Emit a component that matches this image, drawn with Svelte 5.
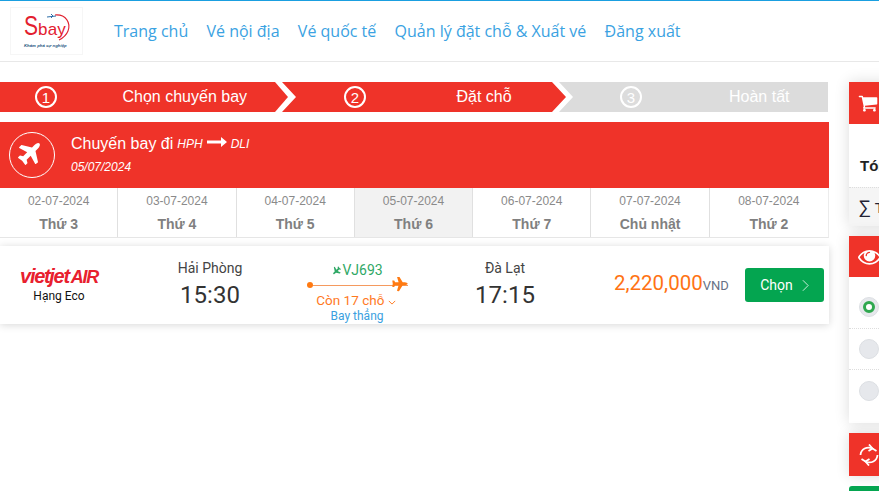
<script>
  const dates = [
    { d: '02-07-2024', w: 'Thứ 3' },
    { d: '03-07-2024', w: 'Thứ 4' },
    { d: '04-07-2024', w: 'Thứ 5' },
    { d: '05-07-2024', w: 'Thứ 6', active: true },
    { d: '06-07-2024', w: 'Thứ 7' },
    { d: '07-07-2024', w: 'Chủ nhật' },
    { d: '08-07-2024', w: 'Thứ 2' }
  ];
  const nav = ['Trang chủ', 'Vé nội địa', 'Vé quốc tế', 'Quản lý đặt chỗ & Xuất vé', 'Đăng xuất'];
  const plane = 'M1376 160q44 52 12 148t-108 172l-161 161 160 696q5 19-12 33l-128 96q-7 6-19 6-4 0-7-1-15-3-21-16l-279-508-259 259 53 194q5 17-8 31l-96 96q-9 9-23 9h-2q-15-2-24-13l-189-252-252-189q-11-7-13-23-1-13 9-25l96-97q9-9 23-9 6 0 8 1l194 53 259-259-508-279q-14-8-17-24-2-16 9-27l128-128q14-13 30-8l665 159 160-160q76-76 172-108t148 12z';
</script>

<div class="page">
  <header class="top">
    <div class="logo">
      <div class="brand"><span class="big-s">S</span><span class="bay">bay</span></div>
      <svg class="arc" viewBox="0 0 40 34" aria-hidden="true">
        <path d="M22 4 C33 3 38 12 35 20 C33 25 30 27 26 29" fill="none" stroke="#e0202e" stroke-width="1.1" />
        <path d="M14 6 l9 -1 M18 3 l2 2 l-2 2" fill="none" stroke="#2d6ea8" stroke-width="1" />
      </svg>
      <div class="slogan">Khám phá sự nghiệp</div>
    </div>
    <nav class="nav">
      {#each nav as item}
        <span>{item}</span>
      {/each}
    </nav>
  </header>

  <div class="layout">
    <main class="main">
      <div class="steps">
        <div class="step s1">
          <span class="num">1</span><span class="label">Chọn chuyến bay</span>
        </div>
        <div class="step s2">
          <span class="num">2</span><span class="label">Đặt chỗ</span>
        </div>
        <div class="step s3">
          <span class="num">3</span><span class="label">Hoàn tất</span>
        </div>
      </div>

      <section class="route">
        <div class="route-icon">
          <svg viewBox="0 0 1792 1792" width="28" height="28" aria-hidden="true"><path fill="#fff" d={plane} /></svg>
        </div>
        <div class="route-text">
          <div class="route-title">
            Chuyến bay đi <i>HPH</i>
            <svg class="long-arrow" viewBox="0 0 20 10" width="20" height="10" aria-hidden="true"><path d="M0 3.500h14V0l6 5-6 5V6.500H0z" fill="#fff" /></svg>
            <i>DLI</i>
          </div>
          <div class="route-date">05/07/2024</div>
        </div>
      </section>

      <div class="dates">
        {#each dates as item}
          <div class="date" class:active={item.active}>
            <div class="d">{item.d}</div>
            <div class="w">{item.w}</div>
          </div>
        {/each}
      </div>

      <article class="flight">
        <div class="airline">
          <div class="vj">vietjet<span class="air">AIR</span></div>
          <div class="cls">Hạng Eco</div>
        </div>
        <div class="place">
          <div class="city">Hải Phòng</div>
          <div class="time">15:30</div>
        </div>
        <div class="mid">
          <div class="code">
            <svg viewBox="0 0 1792 1792" width="10" height="10" aria-hidden="true"><g transform="rotate(180 896 896)"><path fill="#2fa866" d={plane} /></g></svg>VJ693
          </div>
          <div class="track">
            <span class="dot"></span>
            <span class="line"></span>
            <svg class="track-plane" viewBox="0 0 1792 1792" width="17" height="17" aria-hidden="true"><g transform="rotate(45 896 896)"><path fill="#ff7a12" d={plane} /></g></svg>
          </div>
          <div class="seats">
            Còn 17 chỗ
            <svg viewBox="0 0 10 6" width="8" height="5" aria-hidden="true"><path d="M1 1l4 4 4-4" fill="none" stroke="#ff7a1f" stroke-width="1.200" /></svg>
          </div>
          <div class="direct">Bay thẳng</div>
        </div>
        <div class="place to">
          <div class="city">Đà Lạt</div>
          <div class="time">17:15</div>
        </div>
        <div class="price"><span class="amount">2,220,000</span><span class="cur">VND</span></div>
        <button class="choose">
          Chọn
          <svg viewBox="0 0 8 14" width="7" height="13" aria-hidden="true"><path d="M1 1l6 6-6 6" fill="none" stroke="#fff" stroke-width="0.9" /></svg>
        </button>
      </article>
    </main>

    <aside class="side">
      <section class="panel summary">
        <div class="phead">
          <svg viewBox="0 0 1792 1792" width="20" height="20" aria-hidden="true"><path fill="#fff" d="M704 1536q0 52-38 90t-90 38-90-38-38-90 38-90 90-38 90 38 38 90zm896 0q0 52-38 90t-90 38-90-38-38-90 38-90 90-38 90 38 38 90zm128-1088v512q0 24-16.500 42.500t-40.500 21.500l-1044 122q13 60 13 70 0 16-24 64h920q26 0 45 19t19 45-19 45-45 19h-1024q-26 0-45-19t-19-45q0-11 8-31.500t16-36 21.500-40 15.500-29.500l-177-823h-204q-26 0-45-19t-19-45 19-45 45-19h256q16 0 28.500 6.500t19.500 15.500 13 24.500 8 26 5.500 29.500 4.500 26h1201q26 0 45 19t19 45z" /></svg>
        </div>
        <div class="sum-body">Tóm tắt chuyến bay</div>
        <div class="sum-total"><span class="sigma">∑</span> Tổng cộng</div>
      </section>

      <section class="panel options">
        <div class="phead eye">
          <svg viewBox="0 0 1792 1792" width="23" height="23" aria-hidden="true"><path fill="#fff" d="M1664 960q-152-236-381-353 61 104 61 225 0 185-131.500 316.500t-316.500 131.500-316.500-131.500-131.500-316.500q0-121 61-225-229 117-381 353 133 205 333.500 326.500t434.500 121.500 434.500-121.500 333.500-326.500zm-720-384q0-20-14-34t-34-14q-125 0-214.500 89.500t-89.500 214.500q0 20 14 34t34 14 34-14 14-34q0-86 61-147t147-61q20 0 34-14t14-34zm848 384q0 34-20 69-140 230-376.500 368.500t-499.500 138.500-499.500-139-376.500-368q-20-35-20-69t20-69q140-229 376.500-368t499.500-139 499.500 139 376.500 368q20 35 20 69z" /></svg>
        </div>
        <div class="opt"><span class="radio on"></span></div>
        <div class="opt"><span class="radio"></span></div>
        <div class="opt last"><span class="radio"></span></div>
      </section>

      <section class="panel swap">
        <div class="phead">
          <svg viewBox="0 0 22 22" width="22" height="22" aria-hidden="true">
            <path d="M2.500 11C3 5 9 2 14.500 4.500l4 2.500M19.500 11c-.5 6-6.500 9-12 6.500l-4-2.500" fill="none" stroke="#fff" stroke-width="1.800" />
            <path d="M11 .5l3.500 4-4 2.500M11 21.500l-3.500-4 4-2.500" fill="none" stroke="#fff" stroke-width="1.800" />
          </svg>
        </div>
      </section>

      <div class="green"></div>
    </aside>
  </div>
</div>

<style>
  :global(html), :global(body) {
    overflow: hidden;
    height: 100%;
    background: #fff;
  }

  .page {
    width: 879px;
    height: 491px;
    overflow: hidden;
    font-family: "Liberation Sans", Arial, sans-serif;
    color: #333;
  }

  .top {
    height: 62px;
    box-sizing: border-box;
    border-top: 1px solid #1a9fe0;
    border-bottom: 1px solid #e8e8e8;
    display: flex;
    align-items: flex-start;
    padding: 6px 0 0 10px;
  }

  .logo {
    position: relative;
    width: 73px;
    height: 48px;
    box-sizing: border-box;
    border: 1px solid #f6f6f6;
    flex-shrink: 0;
  }

  .brand {
    color: #e3202f;
    font-family: "Liberation Sans", sans-serif;
    line-height: 1;
    padding: 4px 0 0 13px;
    display: flex;
    align-items: baseline;
  }

  .big-s {
    display: inline-block;
    width: 14px;
    font-size: 28px;
    transform: scaleX(0.75);
    transform-origin: left center;
  }

  .bay { font-size: 17px; letter-spacing: 0.2px; }

  .arc {
    position: absolute;
    left: 22px;
    top: 3px;
    width: 40px;
    height: 34px;
  }

  .slogan {
    position: absolute;
    left: 13px;
    top: 35px;
    font-size: 4.300px;
    font-style: italic;
    font-weight: 700;
    color: #27577f;
    white-space: nowrap;
  }

  .nav {
    display: flex;
    gap: 18.300px;
    margin-left: 31px;
    padding-top: 13px;
    font-family: "Open Sans", sans-serif;
    font-size: 16px;
    line-height: 22px;
    color: #3aa2e2;
  }

  .layout {
    display: flex;
    gap: 20px;
    padding-top: 20px;
  }

  .main {
    width: 829px;
    flex-shrink: 0;
  }

  .steps {
    display: flex;
    width: 828px;
    height: 30px;
    color: #fff;
    font-size: 16px;
  }

  .step {
    display: flex;
    align-items: center;
    background: #ef3329;
    flex-shrink: 0;
    box-sizing: border-box;
    height: 30px;
  }

  .s1 {
    width: 288px;
    margin-right: -6px;
    padding-left: 35px;
    clip-path: polygon(0 0, calc(100% - 13px) 0, 100% 50%, calc(100% - 13px) 100%, 0 100%);
  }

  .s2 {
    width: 284px;
    margin-right: -7px;
    padding-left: 62px;
    clip-path: polygon(0 0, calc(100% - 14px) 0, 100% 50%, calc(100% - 14px) 100%, 0 100%, 14px 50%);
  }

  .s3 {
    flex: 1;
    flex-shrink: 1;
    padding-left: 61px;
    background: #dcdcdc;
    clip-path: polygon(0 0, 100% 0, 100% 100%, 0 100%, 14px 50%);
  }

  .num {
    width: 22px;
    height: 22px;
    box-sizing: border-box;
    border: 2px solid #fff;
    border-radius: 50%;
    display: flex;
    align-items: center;
    justify-content: center;
    font-size: 15px;
  }

  .s1 .label { margin-left: 65.500px; }
  .s2 .label { margin-left: 90.500px; }
  .s3 .label { margin-left: 87px; }

  .route {
    margin-top: 10px;
    height: 66px;
    background: #ef3329;
    color: #fff;
    display: flex;
    align-items: center;
    padding-left: 9px;
  }

  .route-icon {
    width: 46px;
    height: 46px;
    box-sizing: border-box;
    border: 1px solid #fff;
    border-radius: 50%;
    display: flex;
    align-items: center;
    justify-content: center;
  }

  .route-text {
    margin-left: 16px;
    margin-top: -2px;
  }

  .route-title {
    font-size: 16px;
    line-height: 20px;
    display: flex;
    align-items: center;
    gap: 4px;
    white-space: nowrap;
  }

  .route-title i { font-size: 12px; margin-top: 1px; }
  .long-arrow { margin-top: -3px; }

  .route-date {
    font-size: 12px;
    font-style: italic;
    margin-top: 5px;
    line-height: 16px;
  }

  .dates {
    display: grid;
    grid-template-columns: repeat(7, 1fr);
    height: 50px;
    box-sizing: border-box;
    border-bottom: 1px solid #e6e6e6;
    border-right: 1px solid #ececec;
  }

  .date {
    text-align: center;
    border-right: 1px solid #e0e0e0;
    padding-top: 6px;
  }

  .date:last-child { border-right: 0; }
  .date.active { background: #f2f2f2; }

  .d {
    font-size: 12px;
    line-height: 14px;
    color: #8a8a8a;
  }

  .w {
    font-size: 14px;
    font-weight: 700;
    line-height: 16px;
    margin-top: 8px;
    color: #808080;
  }

  .flight {
    margin-top: 8px;
    height: 78px;
    background: #fff;
    box-shadow: 0 1px 8px rgba(0, 0, 0, 0.16);
    display: grid;
    grid-template-columns: 118px 184px 110px 186px 1fr auto;
    align-items: start;
    padding-right: 5px;
    font-family: Roboto, sans-serif;
  }

  .airline {
    text-align: center;
    padding-top: 19px;
  }

  .vj {
    color: #e8202e;
    font-family: "Liberation Sans", sans-serif;
    font-size: 20px;
    font-weight: 700;
    font-style: italic;
    letter-spacing: -1.300px;
    line-height: 23px;
    white-space: nowrap;
  }

  .air { font-size: 18px; margin-left: 2px; }

  .cls {
    font-size: 12px;
    line-height: 14px;
    color: #111;
  }

  .place {
    text-align: center;
    padding-top: 14px;
  }

  .city {
    font-size: 14px;
    line-height: 16px;
    color: #444;
  }

  .time {
    font-size: 24px;
    line-height: 28px;
    margin-top: 5px;
    color: #333;
  }

  .mid {
    position: relative;
    text-align: center;
    padding-top: 16px;
  }

  .code {
    font-size: 14px;
    line-height: 16px;
    color: #2fa866;
    display: flex;
    justify-content: center;
    align-items: center;
    gap: 1px;
  }

  .track {
    position: relative;
    height: 14px;
    margin: 0 4px 0 5px;
    display: flex;
    align-items: center;
  }

  .dot {
    width: 6px;
    height: 6px;
    border-radius: 50%;
    background: #ff7a12;
    flex-shrink: 0;
  }

  .line {
    flex: 1;
    height: 1px;
    background: #f59a5f;
  }

  .track-plane {
    position: absolute;
    right: 0;
    top: -1px;
  }

  .seats {
    font-size: 13.500px;
    line-height: 16px;
    color: #ff7a1f;
    white-space: nowrap;
    margin-right: 2px;
  }

  .direct {
    font-size: 12px;
    line-height: 14px;
    color: #3a9fe0;
    white-space: nowrap;
    margin-top: 1px;
  }

  .price {
    padding: 22px 0 0 16px;
    line-height: 30px;
    white-space: nowrap;
  }

  .amount {
    font-size: 20.500px;
    color: #ff7314;
  }

  .cur {
    font-size: 13px;
    color: #667085;
  }

  .choose {
    margin-top: 22px;
    width: 79px;
    height: 34px;
    border: 0;
    border-radius: 3px;
    background: #04a550;
    color: #fff;
    font-family: Roboto, sans-serif;
    font-size: 14px;
    display: flex;
    align-items: center;
    justify-content: center;
    gap: 9px;
    padding: 0;
  }

  .side {
    width: 300px;
    flex-shrink: 0;
    display: flex;
    flex-direction: column;
    gap: 10px;
  }

  .panel {
    background: #fff;
    box-shadow: 0 0 14px rgba(0, 0, 0, 0.14);
  }

  .phead {
    background: #ef3329;
    height: 42px;
    display: flex;
    align-items: center;
    padding-left: 9px;
  }

  .eye { height: 41px; }

  .sum-body {
    height: 63px;
    box-sizing: border-box;
    padding: 33px 0 0 11px;
    font-size: 15px;
    font-weight: 700;
    line-height: 18px;
    color: #222;
  }

  .sum-total {
    height: 39px;
    box-sizing: border-box;
    background: #f5f5f5;
    border-top: 1px dotted #ddd;
    padding: 10px 0 0 9px;
    font-size: 15px;
    line-height: 18px;
    color: #223;
    white-space: nowrap;
  }

  .sigma { font-size: 18px; line-height: 18px; }

  .options { height: 187px; }

  .opt {
    height: 41px;
    box-sizing: border-box;
    border-bottom: 1px dotted #ddd;
    display: flex;
    align-items: center;
    padding-left: 10px;
  }

  .opt:nth-child(2) {
    height: 52px;
    padding-top: 9px;
  }

  .opt.last { border-bottom: 0; }

  .radio {
    position: relative;
    width: 20px;
    height: 20px;
    box-sizing: border-box;
    border-radius: 50%;
    background: #e6e8ec;
    border: 1px solid #dcdfe3;
  }

  .radio.on::after {
    content: "";
    position: absolute;
    left: 3px;
    top: 3px;
    width: 12px;
    height: 12px;
    box-sizing: border-box;
    border: 3px solid #2fa84f;
    border-radius: 50%;
    background: #fff;
  }

  .swap .phead { height: 43px; }

  .green {
    height: 60px;
    background: #04a550;
    border-radius: 3px;
  }
</style>
